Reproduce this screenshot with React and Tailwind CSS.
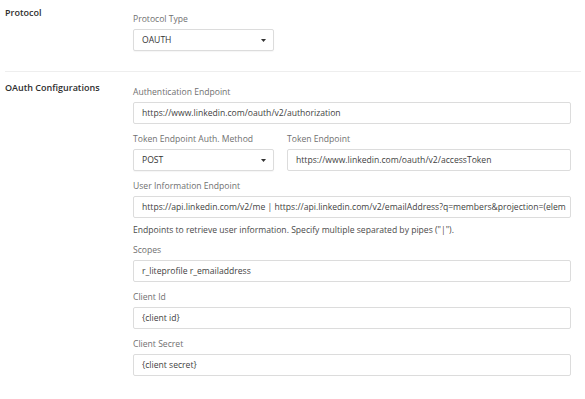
import React from 'react';

const Label = ({ children }) => (
    <div className="text-[8.6px] leading-[12px] text-[#707070] mb-[4px]">{children}</div>
);

const TextBox = ({ value }) => (
    <div className="h-[22px] border border-[#dcdcdc] rounded-[2px] bg-white px-[8px] flex items-center overflow-hidden">
        <span className="text-[8.6px] text-[#3f3f3f] whitespace-nowrap">{value}</span>
    </div>
);

const SelectBox = ({ value }) => (
    <div className="h-[22px] w-[141px] border border-[#dcdcdc] rounded-[2px] bg-white pl-[8px] pr-[7px] flex items-center justify-between shadow-[0_1px_1px_rgba(0,0,0,0.04)]">
        <span className="text-[8.6px] text-[#333]">{value}</span>
        <svg width="5" height="3" viewBox="0 0 5 3"><path d="M0 0h5L2.5 3z" fill="#333" /></svg>
    </div>
);

const Field = ({ label, children, className = '' }) => (
    <div className={`mb-[9px] ${className}`}>
        <Label>{label}</Label>
        {children}
    </div>
);

const App = () => {
    return (
        <div className="w-[585px] h-[399px] bg-white overflow-hidden" style={{ fontFamily: '"Open Sans", "Liberation Sans", sans-serif' }}>
            {/* Protocol */}
            <div className="flex pt-[13px] pb-[20px] ml-[5px] mr-[4px] border-b border-[#eeeeee]">
                <div className="w-[128px] text-[9px] leading-[12px] font-semibold text-[#2e2e2e] -mt-[6px]">Protocol</div>
                <div>
                    <Label>Protocol Type</Label>
                    <SelectBox value="OAUTH" />
                </div>
            </div>

            {/* OAuth */}
            <div className="flex pt-[14px] pl-[5px]">
                <div className="w-[128px] text-[9px] leading-[12px] font-semibold text-[#2e2e2e] -mt-[4px]">OAuth Configurations</div>
                <div className="w-[438px]">
                    <Field label="Authentication Endpoint">
                        <TextBox value="https://www.linkedin.com/oauth/v2/authorization" />
                    </Field>
                    <div className="flex gap-[13px]">
                        <Field label="Token Endpoint Auth. Method">
                            <SelectBox value="POST" />
                        </Field>
                        <Field label="Token Endpoint" className="flex-1">
                            <TextBox value="https://www.linkedin.com/oauth/v2/accessToken" />
                        </Field>
                    </div>
                    <div className="mb-[8px]">
                        <Label>User Information Endpoint</Label>
                        <TextBox value="https://api.linkedin.com/v2/me | https://api.linkedin.com/v2/emailAddress?q=members&projection=(elem" />
                        <div className="text-[8.6px] leading-[12px] text-[#4a4a4a] mt-[6px]">
                            Endpoints to retrieve user information. Specify multiple separated by pipes ("|").
                        </div>
                    </div>
                    <Field label="Scopes">
                        <TextBox value="r_liteprofile r_emailaddress" />
                    </Field>
                    <Field label="Client Id">
                        <TextBox value="{client id}" />
                    </Field>
                    <Field label="Client Secret">
                        <TextBox value="{client secret}" />
                    </Field>
                </div>
            </div>
        </div>
    );
};

export default App;
